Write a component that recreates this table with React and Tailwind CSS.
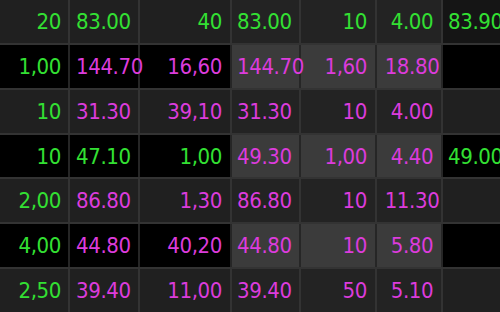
import React from "react";

const G = "text-[#33e033]";
const M = "text-[#dc3cdc]";

// [text, color] per cell; null = empty
const rows = [
  [["20", G], ["83.00", G], ["40", G], ["83.00", G], ["10", G], ["4.00", G], ["83.90", G]],
  [["1,00", G], ["144.70", M], ["16,60", M], ["144.70", M], ["1,60", M], ["18.80", M], null],
  [["10", G], ["31.30", M], ["39,10", M], ["31.30", M], ["10", M], ["4.00", M], null],
  [["10", G], ["47.10", G], ["1,00", G], ["49.30", M], ["1,00", M], ["4.40", M], ["49.00", G]],
  [["2,00", G], ["86.80", M], ["1,30", M], ["86.80", M], ["10", M], ["11.30", M], null],
  [["4,00", G], ["44.80", M], ["40,20", M], ["44.80", M], ["10", M], ["5.80", M], null],
  [["2,50", G], ["39.40", M], ["11,00", M], ["39.40", M], ["50", M], ["5.10", M], null],
];

const align = [
  "justify-end pr-[7px]",
  "justify-start pl-[6px]",
  "justify-end pr-[8px]",
  "justify-start pl-[5px]",
  "justify-end pr-[8px]",
  "justify-center pl-[6px]",
  "justify-start pl-[5px]",
];

const Row = ({ cells, idx }) => {
  const dark = idx % 2 === 1;
  return (
    <div
      className={`grid h-[43.3px] grid-cols-[68px_68px_90px_67px_74px_64px_1fr] gap-x-[2px] ${
        dark ? "bg-[#262626]" : "bg-[#333333]"
      }`}
    >
      {cells.map((c, i) => {
        let bg = dark ? "bg-black" : "bg-[#202020]";
        if (i >= 3 && i <= 5) bg = dark ? "bg-[#3b3b3b]" : "bg-[#232323]";
        if (idx === 0 && i === 6) bg = "bg-[#151515]";
        return (
          <div
            key={i}
            className={`flex items-center whitespace-nowrap ${bg} ${align[i]}`}
          >
            {c && <span className={`relative z-10 ${c[1]}`}>{c[0]}</span>}
          </div>
        );
      })}
    </div>
  );
};

export default function App() {
  return (
    <div
      className="flex h-[312px] w-[500px] flex-col gap-y-[2px] overflow-hidden bg-[#333333] text-[22px] tracking-[-0.4px]"
      style={{ fontFamily: '"DejaVu Sans Condensed", "Liberation Sans", sans-serif' }}
    >
      {rows.map((r, i) => (
        <Row key={i} cells={r} idx={i} />
      ))}
    </div>
  );
}
